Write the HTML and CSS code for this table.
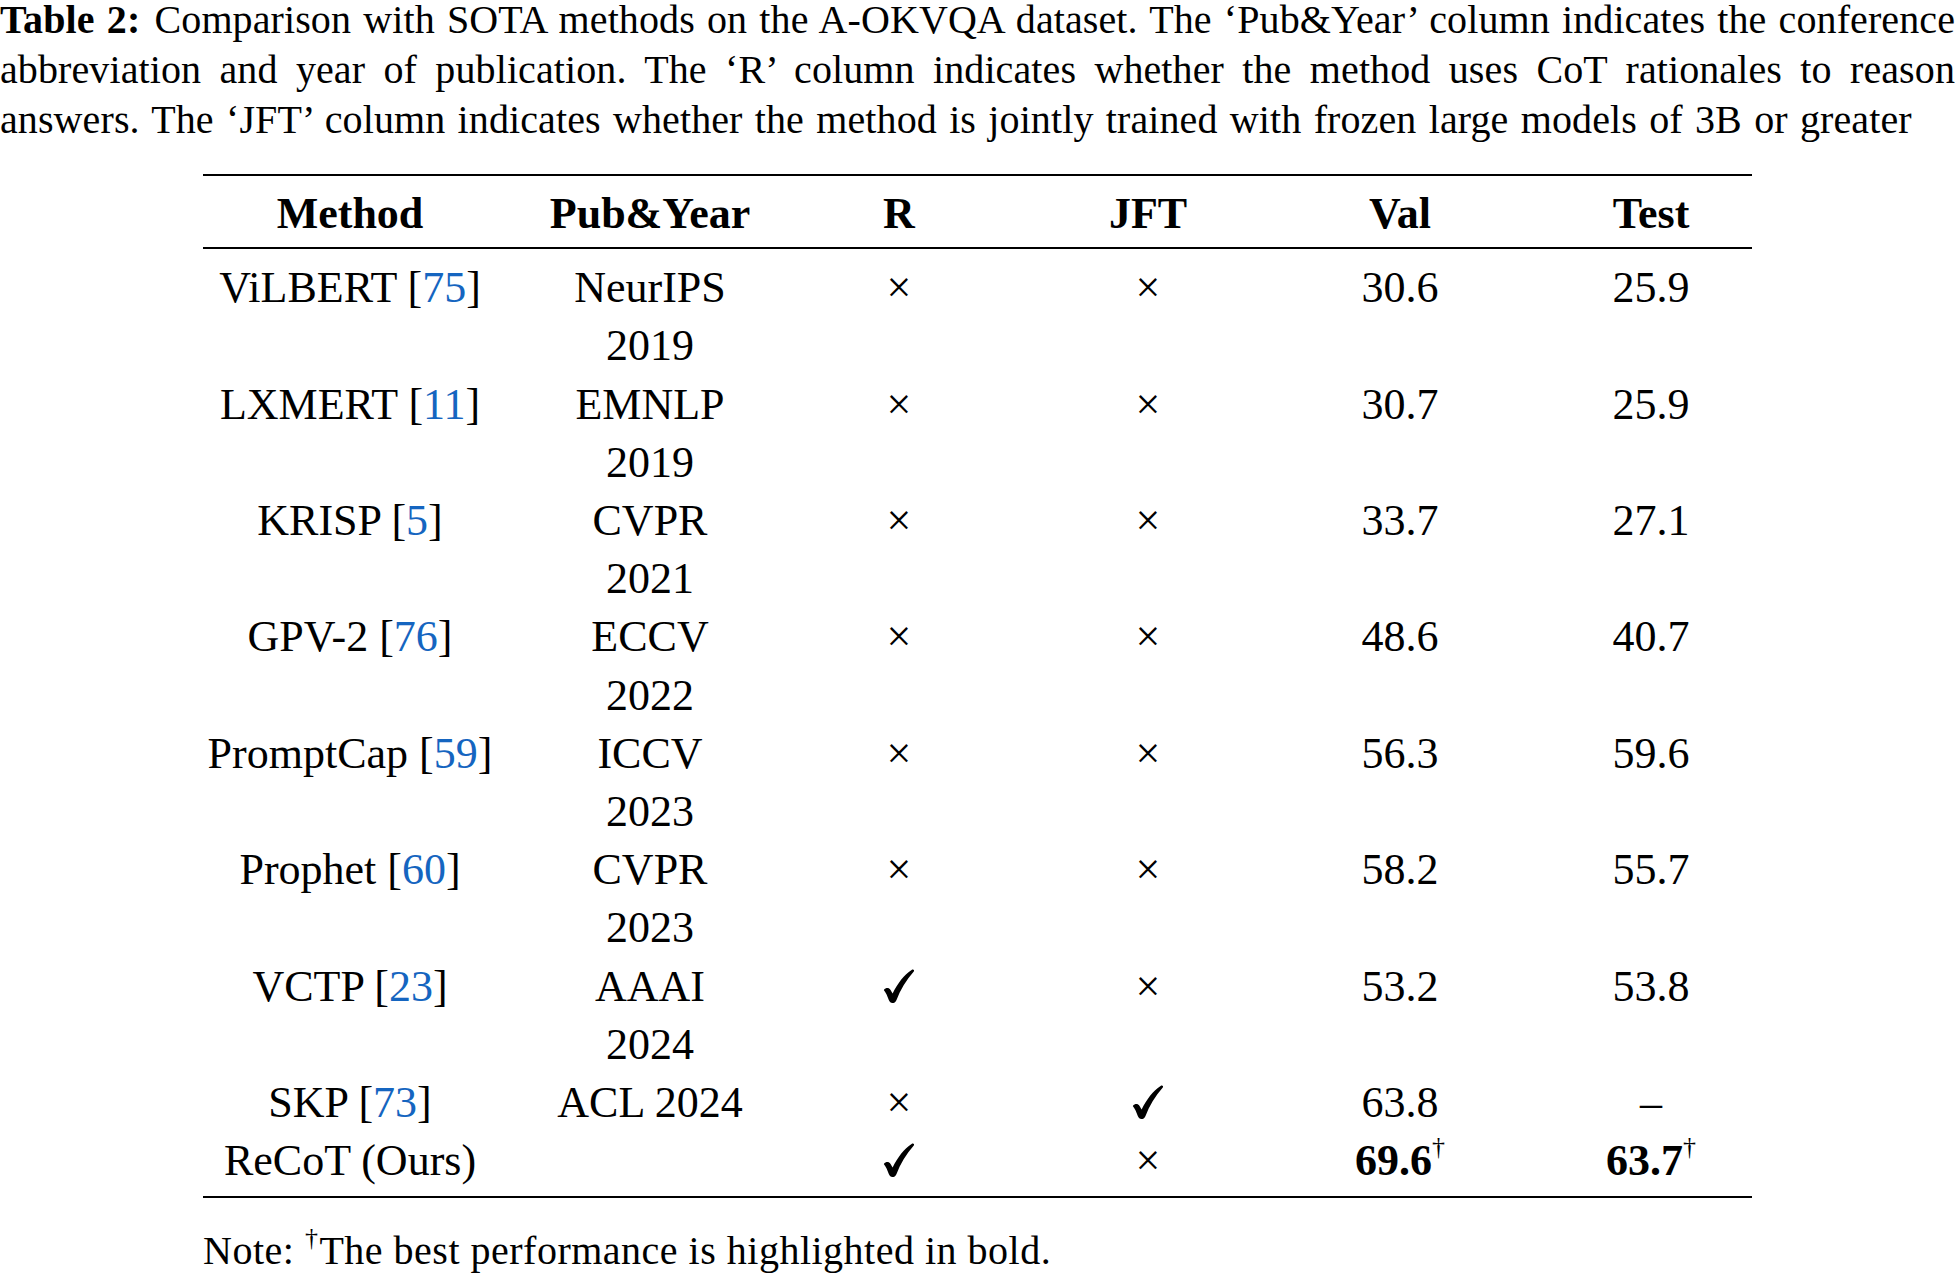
FILE: index.html
```html
<!DOCTYPE html>
<html lang="en">
<head>
<meta charset="utf-8">
<title>Table 2</title>
<link rel="stylesheet" href="styles.css">
</head>
<body>
<div class="caption">
  <span class="cap-line cap-just"><b class="cap-label">Table 2:</b> Comparison with SOTA methods on the A-OKVQA dataset. The ‘Pub&amp;Year’ column indicates the conference</span>
  <span class="cap-line cap-just">abbreviation and year of publication. The ‘R’ column indicates whether the method uses CoT rationales to reason</span>
  <span class="cap-line cap-end">answers. The ‘JFT’ column indicates whether the method is jointly trained with frozen large models of 3B or greater</span>
</div>

<table class="results">
  <colgroup>
    <col class="col-method">
    <col class="col-pub">
    <col class="col-r">
    <col class="col-jft">
    <col class="col-val">
    <col class="col-test">
  </colgroup>
  <thead>
    <tr><th>Method</th><th>Pub&amp;Year</th><th>R</th><th>JFT</th><th>Val</th><th class="last">Test</th></tr>
  </thead>
  <tbody>
    <tr><td>ViLBERT [<span class="ref">75</span>]</td><td class="pub">NeurIPS 2019</td><td><span class="no">×</span></td><td><span class="no">×</span></td><td>30.6</td><td class="last">25.9</td></tr>
    <tr><td>LXMERT [<span class="ref">11</span>]</td><td class="pub">EMNLP 2019</td><td><span class="no">×</span></td><td><span class="no">×</span></td><td>30.7</td><td class="last">25.9</td></tr>
    <tr><td>KRISP [<span class="ref">5</span>]</td><td class="pub">CVPR 2021</td><td><span class="no">×</span></td><td><span class="no">×</span></td><td>33.7</td><td class="last">27.1</td></tr>
    <tr><td>GPV-2 [<span class="ref">76</span>]</td><td class="pub">ECCV 2022</td><td><span class="no">×</span></td><td><span class="no">×</span></td><td>48.6</td><td class="last">40.7</td></tr>
    <tr><td>PromptCap [<span class="ref">59</span>]</td><td class="pub">ICCV 2023</td><td><span class="no">×</span></td><td><span class="no">×</span></td><td>56.3</td><td class="last">59.6</td></tr>
    <tr><td>Prophet [<span class="ref">60</span>]</td><td class="pub">CVPR 2023</td><td><span class="no">×</span></td><td><span class="no">×</span></td><td>58.2</td><td class="last">55.7</td></tr>
    <tr><td>VCTP [<span class="ref">23</span>]</td><td class="pub">AAAI 2024</td><td><svg class="yes" viewBox="0 0 32 34" aria-label="yes"><path d="M0.8 21 C2.8 18.6 5.8 18.4 7.4 20.8 L9.6 24.4 C15 13.6 21 6 28.6 0.9 C30.2 0 31.8 1.2 30.8 2.6 C23 11.6 17.4 21 13.4 31.2 C12.6 33.2 11 34 9.4 34 C7.8 34 6.6 33 5.8 31 C4.4 27.2 3 23.8 0.8 21 Z"/></svg></td><td><span class="no">×</span></td><td>53.2</td><td class="last">53.8</td></tr>
    <tr><td>SKP [<span class="ref">73</span>]</td><td class="pub">ACL 2024</td><td><span class="no">×</span></td><td><svg class="yes" viewBox="0 0 32 34" aria-label="yes"><path d="M0.8 21 C2.8 18.6 5.8 18.4 7.4 20.8 L9.6 24.4 C15 13.6 21 6 28.6 0.9 C30.2 0 31.8 1.2 30.8 2.6 C23 11.6 17.4 21 13.4 31.2 C12.6 33.2 11 34 9.4 34 C7.8 34 6.6 33 5.8 31 C4.4 27.2 3 23.8 0.8 21 Z"/></svg></td><td>63.8</td><td class="last">–</td></tr>
    <tr><td>ReCoT (Ours)</td><td class="pub"></td><td><svg class="yes" viewBox="0 0 32 34" aria-label="yes"><path d="M0.8 21 C2.8 18.6 5.8 18.4 7.4 20.8 L9.6 24.4 C15 13.6 21 6 28.6 0.9 C30.2 0 31.8 1.2 30.8 2.6 C23 11.6 17.4 21 13.4 31.2 C12.6 33.2 11 34 9.4 34 C7.8 34 6.6 33 5.8 31 C4.4 27.2 3 23.8 0.8 21 Z"/></svg></td><td><span class="no">×</span></td><td><b>69.6</b><sup class="dag">†</sup></td><td class="last"><b>63.7</b><sup class="dag">†</sup></td></tr>
  </tbody>
</table>

<p class="note">Note: <sup class="note-dag">†</sup>The best performance is highlighted in bold.</p>
</body>
</html>
```

FILE: styles.css
```css
html, body {
  margin: 0;
  padding: 0;
  background: #ffffff;
}

body {
  font-family: "Liberation Serif", "Times New Roman", serif;
  color: #000000;
  width: 1955px;
}

.caption {
  margin-top: -5px;
  font-size: 40px;
  line-height: 50px;
  letter-spacing: 0.1px;
}

.cap-line {
  display: block;
  white-space: nowrap;
}

.cap-just {
  text-align: justify;
  text-align-last: justify;
  white-space: normal;
}

.cap-end {
  word-spacing: 2.2px;
}

.cap-label {
  font-weight: bold;
  margin-right: 2px;
}

.results {
  margin: 29px 0 0 203px;
  width: 1549px;
  table-layout: fixed;
  border-collapse: collapse;
  font-size: 44px;
  line-height: 58.2px;
  border-top: 2px solid #000;
  border-bottom: 2px solid #000;
}

.col-method { width: 294px; }
.col-pub { width: 306px; }
.col-r { width: 192px; }
.col-jft { width: 306px; }
.col-val { width: 198px; }
.col-test { width: 253px; }

.results th,
.results td {
  padding: 0;
  text-align: center;
  vertical-align: top;
  white-space: nowrap;
}

.results th {
  font-weight: bold;
  padding-top: 9px;
  padding-bottom: 4px;
}

.results thead tr {
  border-bottom: 2px solid #000;
}

.results td.pub {
  white-space: normal;
  padding-left: 56px;
  padding-right: 56px;
}

.results .last {
  padding-left: 51px;
}

.results tbody tr:first-child td {
  padding-top: 10px;
}

.results tbody tr:last-child td {
  padding-bottom: 6px;
}

.ref {
  color: #1565c0;
}

.no {
  font-size: 44px;
}

.yes {
  width: 32px;
  height: 34px;
  vertical-align: -2px;
  fill: #000;
}

.dag {
  font-size: 26px;
  line-height: 0;
  vertical-align: 20px;
}

.note {
  margin: 28px 0 0 203px;
  font-size: 40px;
  line-height: 50px;
  letter-spacing: 0.5px;
}

.note-dag {
  font-size: 26px;
  line-height: 0;
  vertical-align: 18px;
  margin-right: 1px;
}
```
